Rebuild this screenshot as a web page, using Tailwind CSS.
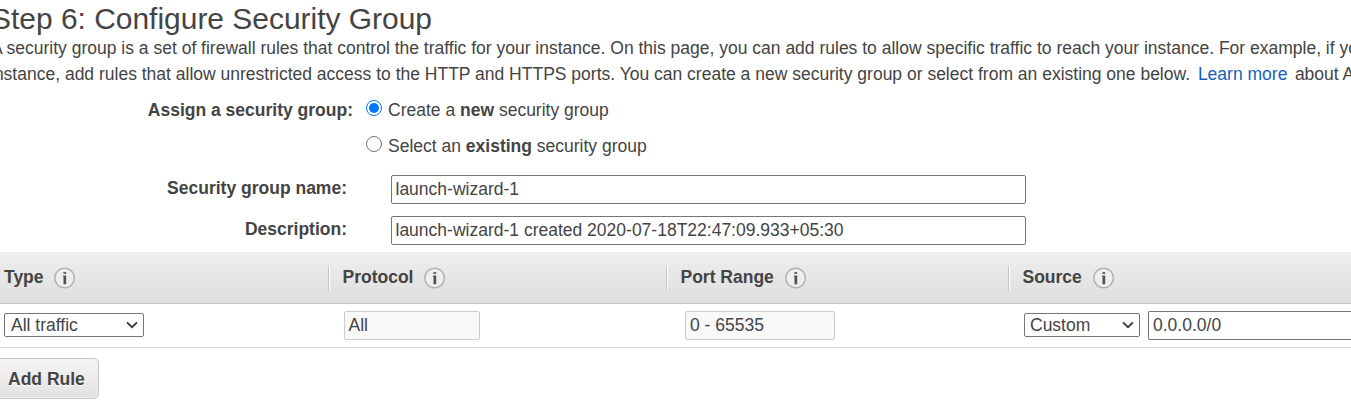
<!DOCTYPE html>
<html lang="en">
<head>
<meta charset="utf-8">
<title>Step 6: Configure Security Group</title>
<script src="https://cdn.jsdelivr.net/npm/@tailwindcss/browser@4"></script>
</head>
<body class="h-[413px] w-[1351px] overflow-hidden bg-white font-['Liberation_Sans',Arial,sans-serif] text-[17.5px] leading-[26px] text-[#444]">
<svg class="hidden">
  <symbol id="info" viewBox="0 0 22 22">
    <circle cx="10.6" cy="11" r="9.8" fill="#eeeeee" stroke="#b2b2b2" stroke-width="1.5"/>
    <rect x="9.4" y="5" width="2.8" height="2" rx=".5" fill="#666"/>
    <path d="M9 8.6h3.2v8.6H9.5V9.4H9z" fill="#505050"/>
  </symbol>
  <symbol id="chev" viewBox="0 0 12 8"><path d="M1 1.4l5 4.8 5-4.8" fill="none" stroke="#3c3c3c" stroke-width="2"/></symbol>
</svg>
<h1 class="-ml-[9px] h-[35px] whitespace-nowrap pt-px text-[29.95px] leading-[36px]">Step 6: Configure Security Group</h1>
<div class="-ml-[9px] h-[52px] overflow-hidden whitespace-nowrap">
  <p class="h-[26px]">A security group is a set of firewall rules that control the traffic for your instance. On this page, you can add rules to allow specific traffic to reach your instance. For example, if you</p>
  <p class="-ml-px h-[26px]">instance, add rules that allow unrestricted access to the HTTP and HTTPS ports. You can create a new security group or select from an existing one below. <a class="ml-[3px] text-[#1560bd]">Learn more</a><span class="ml-[7.5px]">about Amazon</span></p>
</div>
<div class="mt-[10px] flex h-[26px] items-center">
  <b class="w-[353px] text-right">Assign a security group:</b>
  <span class="-mt-1 ml-[13px] mr-[6px] flex size-4 items-center justify-center rounded-full border border-[#0075ff]"><i class="size-[10px] rounded-full bg-[#0075ff]"></i></span>
  <span>Create a <b>new</b> security group</span>
</div>
<div class="mt-[10px] flex h-[26px] items-center">
  <span class="-mt-1 ml-[366px] mr-[6px] size-4 rounded-full border border-[#767676]"></span>
  <span>Select an <b>existing</b> security group</span>
</div>
<div class="mt-4 flex h-[29px]">
  <b class="mr-[44px] w-[347px] shrink-0 text-right">Security group name:</b>
  <div class="w-[635px] rounded-[2px] border border-[#767676] pl-[3.5px]">launch-wizard-1</div>
</div>
<div class="mt-3 flex h-[29px]">
  <b class="mr-[44px] w-[347px] shrink-0 text-right">Description:</b>
  <div class="w-[635px] rounded-[2px] border border-[#767676] pl-[3.5px]">launch-wizard-1 created 2020-07-18T22:47:09.933+05:30</div>
</div>
<div class="mt-[7px] grid h-[52px] grid-cols-[328px_338px_342px_343px] border-b border-[#c6c6c6] bg-linear-to-b from-[#eeeeee] to-[#dfdfdf] pt-[12px] font-bold">
  <div class="flex pl-1"><span class="w-[50px]">Type</span><svg class="mt-[3px] size-[22px]"><use href="#info"/></svg></div>
  <div class="flex"><i class="mr-[12.5px] mt-[2px] h-6 w-[2px] border-l border-[#c4c4c4] bg-white"></i><span class="w-[81.5px]">Protocol</span><svg class="mt-[3px] size-[22px]"><use href="#info"/></svg></div>
  <div class="flex"><i class="mr-[12.5px] mt-[2px] h-6 w-[2px] border-l border-[#c4c4c4] bg-white"></i><span class="w-[104.5px] whitespace-nowrap">Port Range</span><svg class="mt-[3px] size-[22px]"><use href="#info"/></svg></div>
  <div class="flex"><i class="mr-[12.5px] mt-[2px] h-6 w-[2px] border-l border-[#c4c4c4] bg-white"></i><span class="w-[70.5px]">Source</span><svg class="mt-[3px] size-[22px]"><use href="#info"/></svg></div>
</div>
<div class="flex h-11 items-start overflow-hidden border-b border-[#dcdcdc] pt-[7px]">
  <div class="ml-1 mt-[2px] flex h-6 w-[140px] shrink-0 items-center justify-between rounded-[2px] border border-[#767676] pl-[6px] pr-[5px]"><span>All traffic</span><svg class="h-2 w-3"><use href="#chev"/></svg></div>
  <div class="ml-[200px] h-[29px] w-[136px] shrink-0 rounded-[2px] border border-[#cccccc] bg-[#f8f8f8] pl-[3.5px]">All</div>
  <div class="ml-[205px] h-[29px] w-[150px] shrink-0 rounded-[2px] border border-[#cccccc] bg-[#f8f8f8] pl-1">0 - 65535</div>
  <div class="ml-[189px] mt-[2px] flex h-6 w-[116px] shrink-0 items-center justify-between rounded-[2px] border border-[#767676] pl-[5px] pr-[5px]"><span>Custom</span><svg class="h-2 w-3"><use href="#chev"/></svg></div>
  <div class="ml-2 h-[29px] w-[203px] shrink-0 rounded-l-[2px] border border-r-0 border-[#767676] pl-1">0.0.0.0/0</div>
</div>
<button class="-ml-2 mt-[10px] block h-[41px] w-[107px] rounded-[5px] border border-[#c6c6c6] bg-linear-to-b from-[#f5f5f5] to-[#e2e2e2] pl-[15px] text-left font-bold shadow-[inset_-1px_-1px_0_#ededed] text-shadow-[0_1px_0_#fff]">Add Rule</button>
</body>
</html>
